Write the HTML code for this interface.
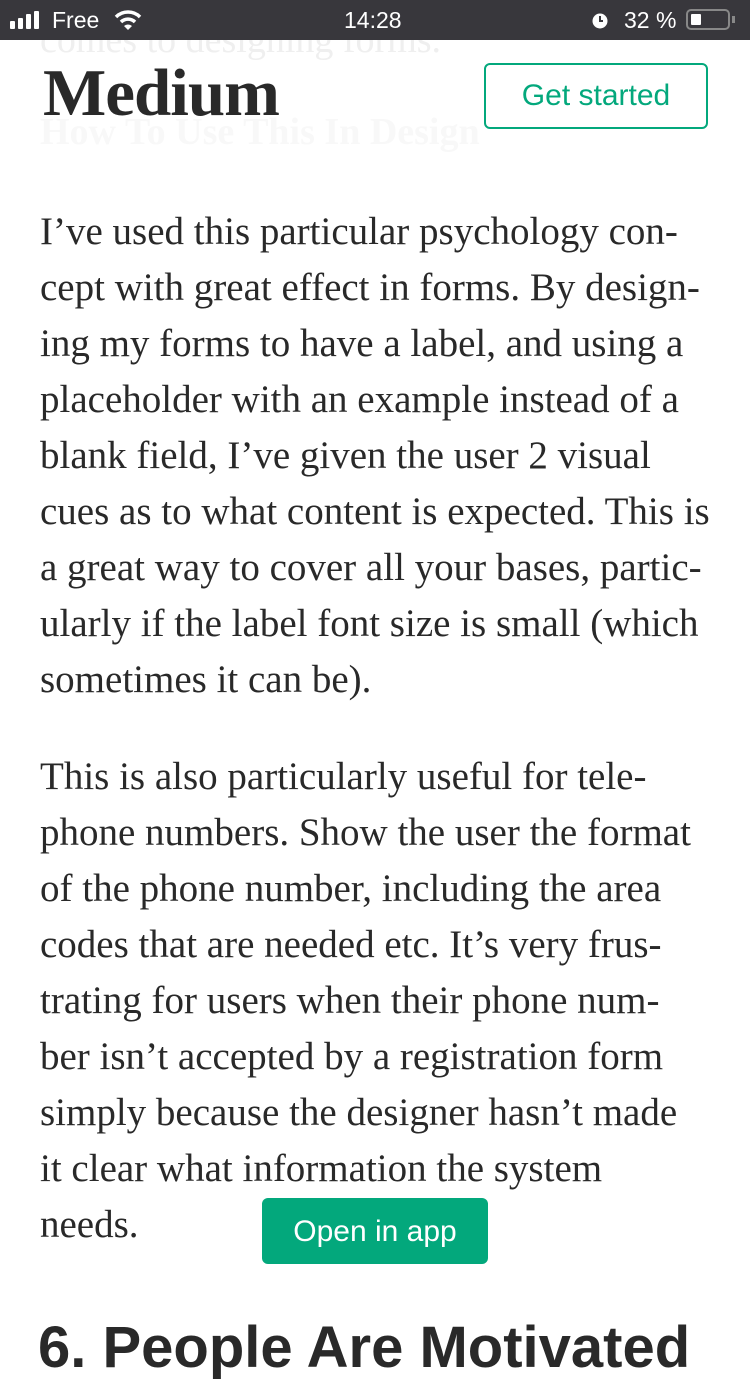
<!DOCTYPE html>
<html><head><meta charset="utf-8"><style>
body{margin:0;width:750px;height:1334px;overflow:hidden;background:#fff;position:relative;font-family:"Liberation Serif",serif;}
.sb{position:absolute;top:0;left:0;width:750px;height:40px;background:#38373c;color:#fff;font-family:"Liberation Sans",sans-serif;font-size:23px;}
.sb span{position:absolute;top:7px}
.l{position:absolute;left:40px;font-size:39px;color:#292929;white-space:nowrap;line-height:56px;}
.ghost{position:absolute;left:40px;color:#f8f8f8;font-size:38px;white-space:nowrap}
</style></head><body>
<div class="ghost" style="top:18px;color:#efefef">comes to designing forms.</div>
<div class="ghost" style="top:110px;font-weight:bold;">How To Use This In Design</div>
<div class="sb">
<svg style="position:absolute;left:10px;top:11px" width="36" height="18"><rect x="0" y="10" width="5" height="8" rx="1" fill="#fff"/><rect x="8" y="7" width="5" height="11" rx="1" fill="#fff"/><rect x="16" y="3" width="5" height="15" rx="1" fill="#fff"/><rect x="24" y="0" width="5" height="18" rx="1" fill="#fff"/></svg>
<span style="left:52px">Free</span>
<svg style="position:absolute;left:114px;top:9px" width="28" height="22" viewBox="0 0 28 22"><path d="M2 8 A17 17 0 0 1 26 8" stroke="#fff" stroke-width="3.5" fill="none"/><path d="M7 13 A10 10 0 0 1 21 13" stroke="#fff" stroke-width="3.5" fill="none"/><path d="M14 21 L10 17 A6 6 0 0 1 18 17Z" fill="#fff"/></svg>
<span style="left:344px">14:28</span>
<svg style="position:absolute;left:590px;top:10px" width="20" height="20"><circle cx="10" cy="11" r="7.5" fill="#fff"/><path d="M10 6v5h3" stroke="#38373c" stroke-width="2" fill="none"/></svg>
<span style="left:624px">32 %</span>
<div style="position:absolute;left:686px;top:9px;width:44px;height:21px;border:2px solid #888;border-radius:5px;box-sizing:border-box"><div style="position:absolute;left:3px;top:3px;width:10px;height:11px;background:#fff;border-radius:1px"></div></div>
<div style="position:absolute;left:732px;top:16px;width:3px;height:7px;background:#888"></div>
</div>
<div style="position:absolute;left:43px;top:55px;font-size:67px;font-weight:bold;color:#292929;letter-spacing:-1px">Medium</div>
<div style="position:absolute;left:484px;top:63px;width:224px;height:66px;border:2px solid #03a87c;border-radius:6px;box-sizing:border-box;color:#03a87c;font-family:'Liberation Sans',sans-serif;font-size:30px;text-align:center;line-height:62px">Get started</div>
<div class="l" style="top:204px">I’ve used this particular psychology con-</div>
<div class="l" style="top:260px">cept with great effect in forms. By design-</div>
<div class="l" style="top:316px">ing my forms to have a label, and using a</div>
<div class="l" style="top:372px">placeholder with an example instead of a</div>
<div class="l" style="top:428px">blank field, I’ve given the user 2 visual</div>
<div class="l" style="top:484px">cues as to what content is expected. This is</div>
<div class="l" style="top:540px">a great way to cover all your bases, partic-</div>
<div class="l" style="top:596px">ularly if the label font size is small (which</div>
<div class="l" style="top:652px">sometimes it can be).</div>
<div class="l" style="top:749px">This is also particularly useful for tele-</div>
<div class="l" style="top:805px">phone numbers. Show the user the format</div>
<div class="l" style="top:861px">of the phone number, including the area</div>
<div class="l" style="top:917px">codes that are needed etc. It’s very frus-</div>
<div class="l" style="top:973px">trating for users when their phone num-</div>
<div class="l" style="top:1029px">ber isn’t accepted by a registration form</div>
<div class="l" style="top:1085px">simply because the designer hasn’t made</div>
<div class="l" style="top:1141px">it clear what information the system</div>
<div class="l" style="top:1197px">needs.</div>
<div style="position:absolute;left:262px;top:1198px;width:226px;height:66px;background:#03a87c;border-radius:6px;color:#fff;font-family:'Liberation Sans',sans-serif;font-size:30px;text-align:center;line-height:68px">Open in app</div>
<div style="position:absolute;left:38px;top:1314px;font-family:'Liberation Sans',sans-serif;font-weight:bold;font-size:58px;color:#292929;white-space:nowrap">6. People Are Motivated</div>
</body></html>
